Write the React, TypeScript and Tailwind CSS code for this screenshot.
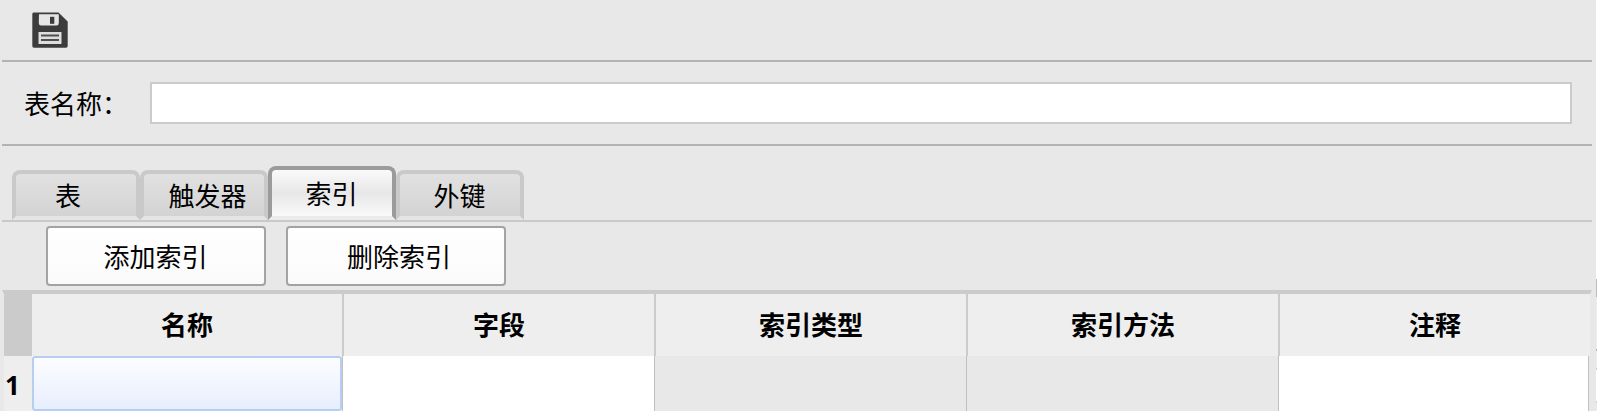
const tabs = [
  { label: '表', active: false, inset: 'pr-4' },
  { label: '触发器', active: false, inset: 'pl-[7px]' },
  { label: '索引', active: true, inset: 'pr-px' },
  { label: '外键', active: false, inset: 'pr-px' },
]

const columns = ['名称', '字段', '索引类型', '索引方法', '注释']

function SaveIcon() {
  return (
    <svg width="36" height="36" viewBox="0 0 36 36">
      <path d="M1.500 .5H26.500L35.700 9.500V34Q35.700 35.700 34 35.700H2Q.3 35.700 .3 34V2Q.3 .5 1.500 .5Z" fill="#3c3c3c" />
      <path d="M7 2.300H26.800V11Q26.800 13.500 24.500 13.500H9Q6.800 13.500 6.800 11Z" fill="#e6e6e6" />
      <rect x="18" y="4.800" width="4.300" height="7" fill="#3c3c3c" />
      <rect x="6.500" y="20" width="23" height="12" rx="0.500" fill="#dedede" />
      <path d="M9 23.500H27M9 28H27" stroke="#505050" strokeWidth="1.900" />
    </svg>
  )
}

function Tab({ label, active, inset }: { label: string; active: boolean; inset: string }) {
  return (
    <div
      className={`flex w-32 justify-center rounded-t-lg border-4 ${inset} ${
        active
          ? 'h-[54px] border-[#9b9b9b] border-b-[#ececec] bg-linear-to-b from-[#fafafa] via-[#e7e7e7] to-[#fafafa] pt-1'
          : 'h-[50px] border-[#c9c9c9] border-b-[#e5e5e5] bg-linear-to-b from-[#e1e1e1] to-[#d3d3d3] pt-0.5'
      }`}
    >
      {label}
    </div>
  )
}

function ToolButton({ label, inset }: { label: string; inset: string }) {
  return (
    <button
      className={`flex h-[60px] w-[220px] items-center justify-center rounded border-2 border-[#a3a3a3] bg-linear-to-b from-white to-[#fafafa] ${inset}`}
    >
      {label}
    </button>
  )
}

export default function App() {
  return (
    <div className="flex h-[411px] w-[1597px] overflow-hidden bg-[#e8e8e8] font-['Noto_Sans_CJK_SC',sans-serif] text-[26px] leading-[38px] text-black">
      <div className="w-[1596px] shrink-0 pl-0.5 pr-1">
        <div className="flex h-[62px] border-b-2 border-[#b3b3b3] pl-[30px] pt-3">
          <SaveIcon />
        </div>

        <div className="flex h-[84px] items-center border-b-2 border-[#b3b3b3] pl-[22px] pr-5">
          <label className="w-[126px]">表名称：</label>
          <input className="h-[42px] flex-1 border-2 border-[#cbcbcb] bg-white outline-none" />
        </div>

        <div className="flex h-[76px] items-end border-b-2 border-[#c9c9c9] pl-2.5">
          {tabs.map((tab) => (
            <Tab key={tab.label} label={tab.label} active={tab.active} inset={tab.inset} />
          ))}
        </div>

        <div className="flex h-[68px] gap-5 pl-11 pt-1">
          <ToolButton label="添加索引" inset="pr-px" />
          <ToolButton label="删除索引" inset="pl-1.5" />
        </div>

        <div className="h-[121px] overflow-hidden border-x-2 border-t-4 border-[#e8e8e8] border-t-[#cbcbcb]">
          <div className="flex h-[62px] bg-[#eeeeee] font-bold">
            <div className="w-7 shrink-0 bg-[#cbcbcb]" />
            {columns.map((name) => (
              <div
                key={name}
                className="flex w-[312px] shrink-0 items-center justify-center border-r-2 border-[#cbcbcb] pb-0.5 last:w-[310px] last:border-r-0"
              >
                {name}
              </div>
            ))}
          </div>
          <div className="flex h-[60px]">
            <div className="w-7 shrink-0 bg-[#eeeeee] pl-px pt-2.5 font-['Noto_Sans'] font-bold">1</div>
            <div className="w-[311px] border-r border-[#c0c0c0] bg-white">
              <div className="h-[55px] rounded-[3px] border-2 border-[#b7cdf2] bg-linear-to-b from-[#fcfdff] to-[#e7eefd]" />
            </div>
            <div className="w-[312px] border-r border-[#c0c0c0] bg-white" />
            <div className="w-[312px] border-r border-[#c0c0c0]" />
            <div className="w-[312px] border-r border-[#c0c0c0]" />
            <div className="w-[310px] border-r border-[#c0c0c0] bg-white" />
          </div>
        </div>
      </div>

      {/* edge of the neighbouring window */}
      <div className="flex w-px flex-col bg-[#ececec]">
        <div className="h-[279px] bg-white" />
        <div className="h-[18px] bg-[#bdbdbd]" />
        <div className="mt-[52px] h-0.5 bg-[#b5b5b5]" />
        <div className="mt-[17px] h-0.5 bg-[#d0d0d0]" />
        <div className="h-[31px] bg-white" />
        <div className="h-0.5 bg-[#d0d0d0]" />
      </div>
    </div>
  )
}
